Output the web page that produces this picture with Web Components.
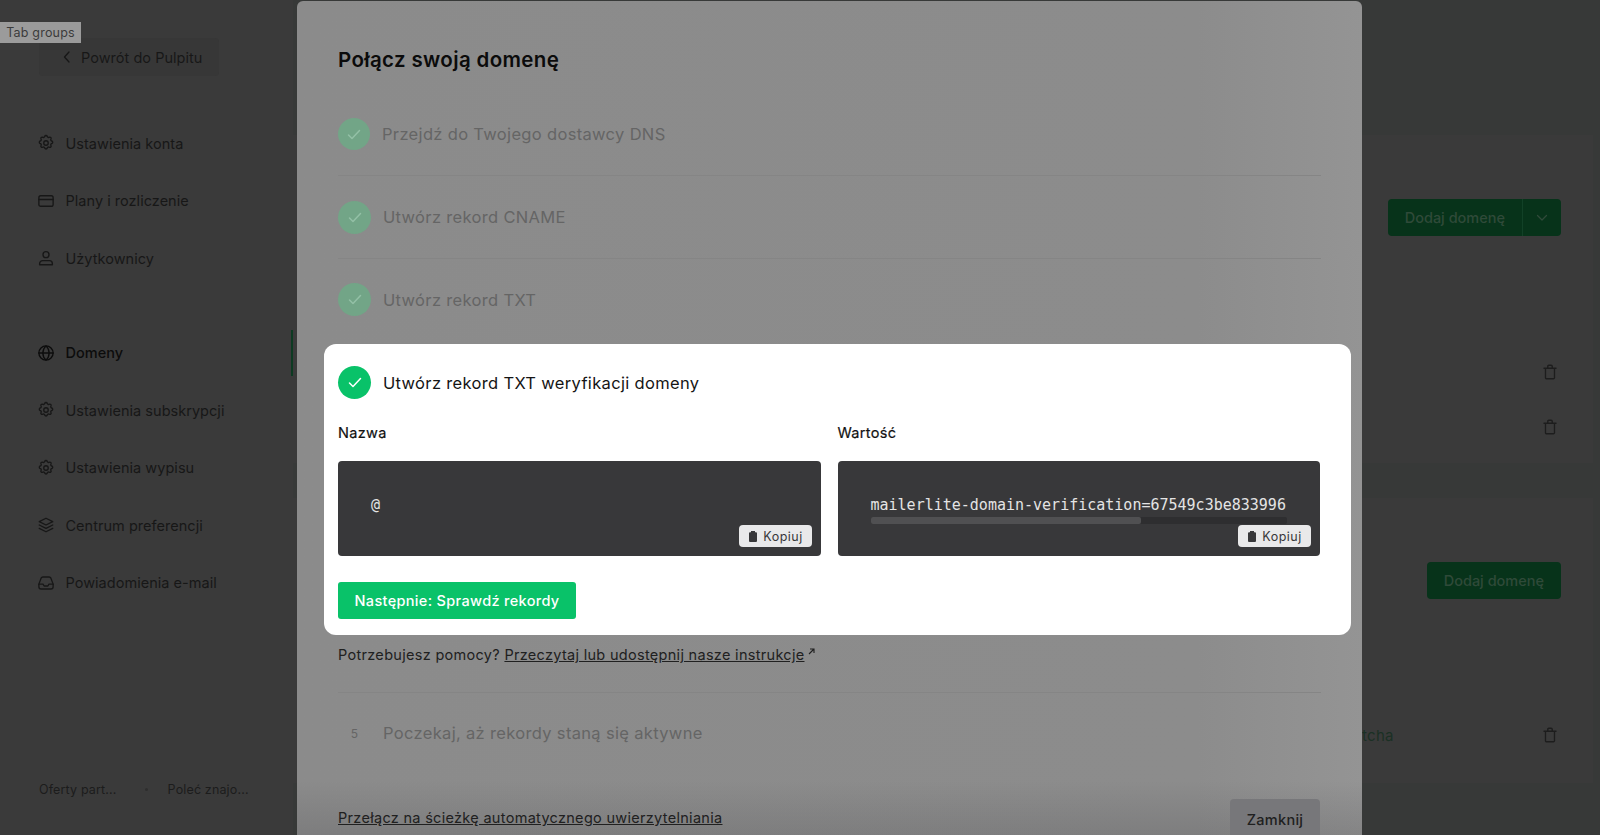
<!DOCTYPE html>
<html lang="pl">
<head>
<meta charset="utf-8">
<title>Połącz swoją domenę</title>
<style>
  html, body { margin: 0; height: 835px; overflow: hidden; background: #3a3a3a; }
  body { font-family: Inter, "Liberation Sans", sans-serif; }
</style>
</head>
<body>
<app-page>
  <side-bar slot="side"></side-bar>
  <domain-list slot="content"></domain-list>
  <domain-modal slot="modal"></domain-modal>
</app-page>

<script>
// ---- Icons ----
const ICONS = {
  gear: '<path d="M10.3 3.3c.4-1.7 2.9-1.7 3.4 0a1.7 1.7 0 0 0 2.6 1.1c1.5-.9 3.2.8 2.3 2.3a1.7 1.7 0 0 0 1.1 2.6c1.7.4 1.7 2.9 0 3.4a1.7 1.7 0 0 0-1.1 2.6c.9 1.5-.8 3.2-2.3 2.3a1.7 1.7 0 0 0-2.6 1.1c-.4 1.7-2.9 1.7-3.4 0a1.7 1.7 0 0 0-2.6-1.1c-1.5.9-3.2-.8-2.3-2.3a1.7 1.7 0 0 0-1.1-2.6c-1.7-.4-1.7-2.9 0-3.4a1.7 1.7 0 0 0 1.1-2.6c-.9-1.5.8-3.2 2.3-2.3a1.7 1.7 0 0 0 2.6-1.1z"/><circle cx="12" cy="12" r="3"/>',
  card: '<rect x="2.5" y="5" width="19" height="14" rx="2.5"/><path d="M2.5 10h19"/>',
  user: '<circle cx="12" cy="7.5" r="4"/><path d="M3.5 21v-1.5a4 4 0 0 1 4-4h9a4 4 0 0 1 4 4V21z"/>',
  globe: '<circle cx="12" cy="12" r="9.5"/><path d="M2.5 12h19M12 2.5c3.2 3 4.2 6 4.2 9.5s-1 6.5-4.2 9.5c-3.2-3-4.2-6-4.2-9.5s1-6.5 4.2-9.5z"/>',
  layers: '<path d="M12 3l9 4.5-9 4.5-9-4.5z"/><path d="M3 12l9 4.5 9-4.5"/><path d="M3 16.5l9 4.5 9-4.5"/>',
  inbox: '<path d="M2.5 13.5V17a3 3 0 0 0 3 3h13a3 3 0 0 0 3-3v-3.5l-3-8A2.5 2.5 0 0 0 16.200 4H7.800a2.500 2.500 0 0 0-2.300 1.500z"/><path d="M2.500 13.500H8l1.500 2.500h5l1.500-2.500h5.500"/>',
  trash: '<path d="M6 7h12v12.500a1.500 1.500 0 0 1-1.500 1.500h-9A1.500 1.500 0 0 1 6 19.500zM4 7h16M9 7V4.500A1.500 1.500 0 0 1 10.500 3h3A1.500 1.500 0 0 1 15 4.500V7"/>'
};
function svgIcon(name, size) {
  return `<svg width="${size}" height="${size}" viewBox="0 0 24 24" fill="none" stroke="currentColor" stroke-width="1.8" stroke-linecap="round" stroke-linejoin="round">${ICONS[name]}</svg>`;
}

// ---- Page frame ----
class AppPage extends HTMLElement {
  constructor() {
    super();
    this.attachShadow({ mode: "open" }).innerHTML = `
      <style>
        :host { display: grid; grid-template-columns: 293px 1fr; height: 835px; position: relative; overflow: hidden; }
        .modal { position: absolute; left: 297px; top: 1px; width: 1065px; }
        .tip {
          position: absolute; left: 0; top: 22px; width: 81px; height: 21px;
          background: #9b9b9b; color: #3b3b3b; font-size: 12.5px; letter-spacing: .2px;
          display: flex; align-items: center; justify-content: center;
        }
      </style>
      <slot name="side"></slot>
      <slot name="content"></slot>
      <div class="modal"><slot name="modal"></slot></div>
      <div class="tip">Tab groups</div>`;
  }
}

// ---- Sidebar ----
class NavItem extends HTMLElement {
  constructor() {
    super();
    const active = this.hasAttribute("active");
    this.attachShadow({ mode: "open" }).innerHTML = `
      <style>
        :host { display: flex; align-items: center; height: 57.5px; gap: 10.5px; padding-left: 37px; position: relative;
          font-size: 14.5px; letter-spacing: .03px; color: ${active ? "#0c0c0c" : "#171717"}; font-weight: ${active ? 500 : 400}; }
        svg { display: block; }
        .bar { position: absolute; right: 0; top: 6px; bottom: 6px; width: 2px; background: #0c3a22; }
      </style>
      ${svgIcon(this.getAttribute("icon"), 18)}
      <slot></slot>
      ${active ? '<div class="bar"></div>' : ""}`;
  }
}

class SideBar extends HTMLElement {
  constructor() {
    super();
    this.attachShadow({ mode: "open" }).innerHTML = `
      <style>
        :host { display: flex; flex-direction: column; height: 835px; background: #3a3a3a; box-sizing: border-box; padding-top: 38px; }
        .back {
          margin-left: 39px; width: 180px; height: 38px; background: #373737; border-radius: 4px;
          display: flex; align-items: center; gap: 10px; padding-left: 24px; box-sizing: border-box;
          font-size: 14.5px; letter-spacing: .03px; color: #171717;
        }
        .group { padding-top: 38.5px; }
        .group + .group { padding-top: 37px; }
        .foot {
          margin-top: auto; margin-bottom: 38px; padding-left: 39px; display: flex; align-items: center;
          font-size: 12.5px; letter-spacing: .15px; color: #1c1c1c;
        }
        .foot .dot { width: 3px; height: 3px; border-radius: 50%; background: #2e2e2e; margin: 0 20px 0 28px; }
      </style>
      <div class="back">
        <svg width="8" height="12" viewBox="0 0 8 12" fill="none" stroke="currentColor" stroke-width="1.3" stroke-linecap="round" stroke-linejoin="round"><path d="M6 1L1.5 6 6 11"/></svg>
        <span>Powrót do Pulpitu</span>
      </div>
      <div class="group">
        <nav-item icon="gear">Ustawienia konta</nav-item>
        <nav-item icon="card">Plany i rozliczenie</nav-item>
        <nav-item icon="user">Użytkownicy</nav-item>
      </div>
      <div class="group">
        <nav-item icon="globe" active>Domeny</nav-item>
        <nav-item icon="gear">Ustawienia subskrypcji</nav-item>
        <nav-item icon="gear">Ustawienia wypisu</nav-item>
        <nav-item icon="layers">Centrum preferencji</nav-item>
        <nav-item icon="inbox">Powiadomienia e-mail</nav-item>
      </div>
      <div class="foot"><span>Oferty part...</span><span class="dot"></span><span>Poleć znajo...</span></div>`;
  }
}

// ---- Page content behind the modal ----
class AddButton extends HTMLElement {
  constructor() {
    super();
    const split = this.hasAttribute("split");
    this.attachShadow({ mode: "open" }).innerHTML = `
      <style>
        :host { display: inline-flex; height: 37px; background: #07331a; border-radius: 4px; color: #2f4a39;
          font-size: 14.5px; font-weight: 500; letter-spacing: 0; align-items: center; }
        .label { padding: 0 17px 0 16.5px; }
        .caret { height: 100%; width: 38px; border-left: 1px solid #124127; display: flex; align-items: center; justify-content: center; }
      </style>
      <span class="label"><slot></slot></span>
      ${split ? `<span class="caret"><svg width="12" height="8" viewBox="0 0 12 8" fill="none" stroke="currentColor" stroke-width="1.3" stroke-linecap="round" stroke-linejoin="round"><path d="M1.5 1.5L6 6l4.5-4.5"/></svg></span>` : ""}`;
  }
}

class DomainList extends HTMLElement {
  constructor() {
    super();
    this.attachShadow({ mode: "open" }).innerHTML = `
      <style>
        :host { display: flex; flex-direction: column; height: 835px; background: #373938; }
        .head { height: 135px; flex: none; }
        .box { background: #3a3a3a; margin-right: 7px; display: flex; flex-direction: column; box-sizing: border-box; padding-right: 32px; }
        .one { height: 328px; padding-top: 64px; }
        .two { height: 285px; margin-top: 35px; padding-top: 64px; }
        .btn { align-self: flex-end; }
        .rows { margin-top: 127px; display: flex; flex-direction: column; gap: 37px; align-self: flex-end; color: #1d1d1d; padding-right: 2px; }
        .rows svg { display: block; }
        .two .rows { margin-top: 126px; align-self: stretch; flex-direction: row; justify-content: space-between; align-items: center; padding-left: 1069px; }
        .cap { color: #1a3024; font-size: 15px; letter-spacing: .3px; padding-top: 1px; }
        .trash { color: #1d1d1d; display: flex; }
      </style>
      <div class="head"></div>
      <div class="box one">
        <add-button class="btn" split>Dodaj domenę</add-button>
        <div class="rows">${svgIcon("trash", 18)}${svgIcon("trash", 18)}</div>
      </div>
      <div class="box two">
        <add-button class="btn">Dodaj domenę</add-button>
        <div class="rows"><span class="cap">tcha</span><span class="trash">${svgIcon("trash", 18)}</span></div>
      </div>`;
  }
}

// ---- Modal parts ----
class StepRow extends HTMLElement {
  constructor() {
    super();
    const num = this.getAttribute("num");
    const live = this.hasAttribute("live");
    const size = this.hasAttribute("small") ? 32 : 33;
    this.attachShadow({ mode: "open" }).innerHTML = `
      <style>
        :host { display: flex; align-items: center; gap: 12px; font-size: 16.5px; letter-spacing: .33px;
          color: ${live ? "#151515" : "#656565"}; }
        .dot { width: ${size}px; height: ${size}px; border-radius: 50%; flex: none; display: flex; align-items: center; justify-content: center;
          background: ${num ? "transparent" : live ? "#09c269" : "#72a587"};
          color: ${live ? "#fff" : "#93c0a6"}; }
        .num { font-size: 12px; color: #656565; letter-spacing: 0; }
        svg { display: block; }
      </style>
      <div class="dot">${num ? `<span class="num">${num}</span>` :
        `<svg width="14" height="11" viewBox="0 0 14 11" fill="none" stroke="currentColor" stroke-width="1.5" stroke-linecap="round" stroke-linejoin="round"><path d="M1.5 6L5 9.5l7.5-8"/></svg>`}</div>
      <span><slot></slot></span>`;
  }
}

class CopyButton extends HTMLElement {
  constructor() {
    super();
    this.attachShadow({ mode: "open" }).innerHTML = `
      <style>
        :host { display: flex; align-items: center; justify-content: center; gap: 6px; width: 73px; height: 22px; box-sizing: border-box; padding-left: 1px;
          background: #e9e9ea; border-radius: 4px; color: #38383a; font-size: 12.5px; letter-spacing: .5px; }
      </style>
      <svg width="8" height="11" viewBox="0 0 8 11"><path fill="currentColor" d="M2 0h4v1.200h1a1 1 0 0 1 1 1V10a1 1 0 0 1-1 1H1a1 1 0 0 1-1-1V2.200a1 1 0 0 1 1-1h1z"/></svg>
      <span>Kopiuj</span>`;
  }
}

class CodeBox extends HTMLElement {
  constructor() {
    super();
    const scroll = this.hasAttribute("scroll");
    this.attachShadow({ mode: "open" }).innerHTML = `
      <style>
        :host { display: block; }
        .label { font-size: 14.5px; font-weight: 400; -webkit-text-stroke: .2px #111; letter-spacing: .3px; color: #111; height: 20px; line-height: 20px; margin-bottom: 18px; }
        .box { position: relative; height: 95px; box-sizing: border-box; background: #38383a; border-radius: 4px; padding: 34px 33px 0; }
        .code { font-family: "DejaVu Sans Mono", "Liberation Mono", monospace; font-size: 15px; line-height: 20px; color: #e4e4e4; white-space: nowrap; }
        .track { height: 7px; margin-top: 2px; background: #2e2e30; border-radius: 2px; }
        .thumb { height: 100%; width: 65%; background: #505052; border-radius: 2px; }
        copy-button { position: absolute; right: 9px; bottom: 9px; }
      </style>
      <div class="label">${this.getAttribute("label")}</div>
      <div class="box">
        <div class="code"><slot></slot></div>
        ${scroll ? '<div class="track"><div class="thumb"></div></div>' : ""}
        <copy-button></copy-button>
      </div>`;
  }
}

class DomainModal extends HTMLElement {
  constructor() {
    super();
    this.attachShadow({ mode: "open" }).innerHTML = `
      <style>
        :host { display: block; height: 834px; box-sizing: border-box; padding: 0 41px; border-radius: 6px 6px 0 0; overflow: hidden;
          background: linear-gradient(to bottom, transparent 780px, rgba(60,60,64,.18) 834px), linear-gradient(to right, #8b8b8b 0, #8c8c8c 900px, #949494 100%); }
        h1 { margin: 0; padding-top: 45px; height: 47px; font-size: 20.5px; line-height: 28px; font-weight: 600; letter-spacing: .35px; color: #0b0b0b; box-sizing: content-box; }
        .step { height: 83px; display: flex; align-items: center; border-bottom: 1px solid #858585; box-sizing: border-box; }
        .step.last { border-bottom: none; height: 81px; }
        .spot {
          margin: 4px -30px 0 -14px; height: 291px; box-sizing: border-box; background: #fff; border-radius: 12px; padding: 22px 0 0 14px;
        }
        .cols { display: grid; grid-template-columns: 483px 482.5px; column-gap: 16.5px; margin-top: 24px; }
        .next { margin-top: 26px; width: 238px; height: 37px; background: #09c269; border-radius: 3px; color: #fff; display: flex; align-items: center; justify-content: center;
          font-size: 14.5px; font-weight: 500; letter-spacing: .33px; }
        .help { height: 58px; border-bottom: 1px solid #858585; padding-top: 11px; box-sizing: border-box; font-size: 14.5px; letter-spacing: .3px; color: #202020; line-height: 18px; }
        a { color: inherit; text-decoration: underline; }
        .arrow { display: inline-block; margin-left: 3px; vertical-align: 5px; }
        .five { height: 80px; display: flex; align-items: center; }
        .foot { display: flex; justify-content: space-between; margin-top: 26px; font-size: 14.5px; letter-spacing: .3px; color: #202020; }
        .foot a { line-height: 38px; }
        .close { width: 90px; height: 40px; background: #77777a; border-radius: 4px; display: flex; align-items: center; justify-content: center; margin-right: 1px; font-weight: 500; }
      </style>
      <h1>Połącz swoją domenę</h1>
      <div class="step"><step-row small>Przejdź do Twojego dostawcy DNS</step-row></div>
      <div class="step"><step-row>Utwórz rekord CNAME</step-row></div>
      <div class="step last"><step-row>Utwórz rekord TXT</step-row></div>
      <div class="spot">
        <step-row live>Utwórz rekord TXT weryfikacji domeny</step-row>
        <div class="cols">
          <code-box label="Nazwa">@</code-box>
          <code-box label="Wartość" scroll>mailerlite-domain-verification=67549c3be833996</code-box>
        </div>
        <div class="next">Następnie: Sprawdź rekordy</div>
      </div>
      <div class="help">Potrzebujesz pomocy? <a>Przeczytaj lub udostępnij nasze instrukcje</a><svg class="arrow" width="7" height="7" viewBox="0 0 7 7" fill="none" stroke="currentColor" stroke-width="1.1"><path d="M1 6l5-5M2 1h4v4"/></svg></div>
      <div class="five"><step-row num="5">Poczekaj, aż rekordy staną się aktywne</step-row></div>
      <div class="foot"><a>Przełącz na ścieżkę automatycznego uwierzytelniania</a><div class="close">Zamknij</div></div>`;
  }
}

// ---- Custom Elements registrieren ----
customElements.define("nav-item", NavItem);
customElements.define("side-bar", SideBar);
customElements.define("add-button", AddButton);
customElements.define("domain-list", DomainList);
customElements.define("step-row", StepRow);
customElements.define("copy-button", CopyButton);
customElements.define("code-box", CodeBox);
customElements.define("domain-modal", DomainModal);
customElements.define("app-page", AppPage);
</script>
</body>
</html>
